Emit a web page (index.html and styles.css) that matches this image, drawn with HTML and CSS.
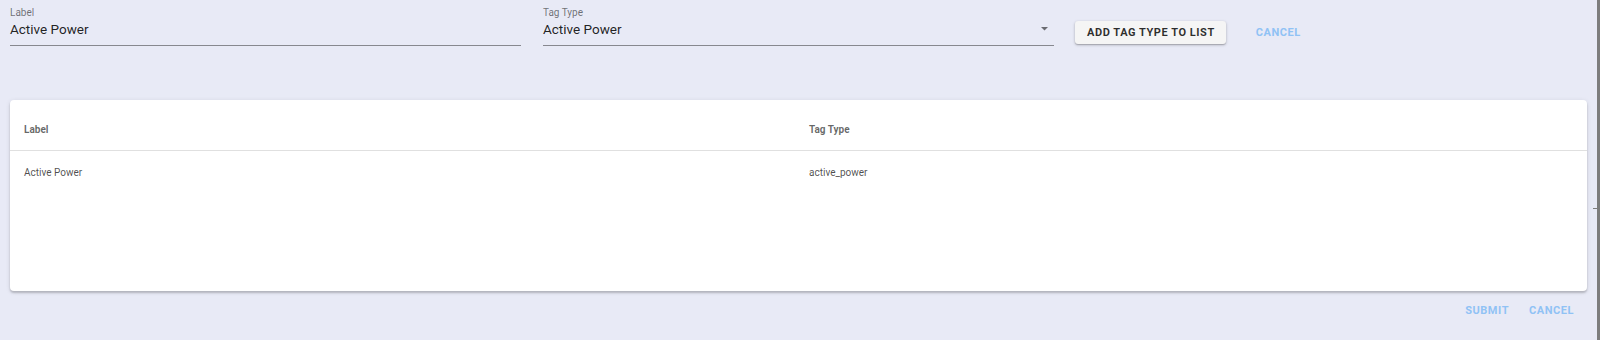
FILE: index.html
```html
<!DOCTYPE html>
<html>
<head>
<meta charset="utf-8">
<link rel="stylesheet" href="styles.css">
</head>
<body>
<div class="page">
  <div class="form-row">
    <div class="field">
      <label class="field-label">Label</label>
      <div class="field-input">Active Power</div>
    </div>
    <div class="field select">
      <label class="field-label">Tag Type</label>
      <div class="field-input">Active Power
        <svg class="arrow" width="7" height="4" viewBox="0 0 7 4"><path d="M0 0 L7 0 L3.5 3.5 Z" fill="rgba(0,0,0,0.54)"/></svg>
      </div>
    </div>
    <button class="btn raised">Add tag type to list</button>
    <button class="btn flat">Cancel</button>
  </div>

  <div class="card">
    <table class="table">
      <thead>
        <tr><th class="col-label">Label</th><th>Tag Type</th></tr>
      </thead>
      <tbody>
        <tr><td>Active Power</td><td>active_power</td></tr>
      </tbody>
    </table>
  </div>

  <div class="actions">
    <button class="btn flat">Submit</button>
    <button class="btn flat">Cancel</button>
  </div>
</div>
</body>
</html>
```
FILE: styles.css
```css
html, body {
  margin: 0;
  padding: 0;
  height: 100%;
}
body {
  background: #e8eaf6;
  font-family: Roboto, "Liberation Sans", sans-serif;
  overflow: hidden;
}
.page {
  box-sizing: border-box;
  height: 340px;
  padding: 0 13px 0 10px;
  border-right: 3px solid #7d7d7d;
  position: relative;
}
.page::after {
  content: "";
  position: absolute;
  right: 0;
  top: 208px;
  width: 4px;
  height: 1px;
  background: #7d7d7d;
}
.form-row {
  display: flex;
  align-items: flex-start;
  padding-top: 7px;
}
.field {
  width: 511px;
  display: flex;
  flex-direction: column;
}
.field.select {
  margin-left: 22px;
}
.field-label {
  font-size: 10px;
  line-height: 12px;
  color: rgba(0,0,0,0.54);
}
.field-input {
  font-size: 13.5px;
  line-height: 20px;
  padding: 0 0 6px;
  color: rgba(0,0,0,0.87);
  border-bottom: 1px solid rgba(0,0,0,0.42);
  display: flex;
  align-items: center;
  justify-content: space-between;
}
.arrow {
  margin-right: 6px;
}
.btn {
  font-family: Roboto, "Liberation Sans", sans-serif;
  font-size: 11px;
  font-weight: 700;
  letter-spacing: 0.55px;
  text-transform: uppercase;
  border: none;
  background: transparent;
  cursor: pointer;
  height: 23px;
}
.btn.raised {
  margin-left: 21px;
  margin-top: 14px;
  padding: 0 11px 0 12px;
  background: #f5f5f5;
  color: rgba(0,0,0,0.82);
  border-radius: 3px;
  box-shadow: 0 1px 3px rgba(0,0,0,0.25), 0 1px 1px rgba(0,0,0,0.14);
}
.btn.flat {
  color: #90c2f5;
  padding: 0 10px;
}
.form-row .btn.flat {
  margin-left: 20px;
  margin-top: 14px;
}
.card {
  margin-top: 54px;
  width: 1577px;
  height: 191px;
  background: #fff;
  border-radius: 4px;
  box-shadow: 0 2px 2px rgba(0,0,0,0.18), 0 1px 5px rgba(0,0,0,0.1);
}
.table {
  width: 100%;
  border-collapse: collapse;
  font-size: 10px;
}
.table th {
  text-align: left;
  vertical-align: middle;
  height: 42px;
  padding: 8px 0 0 14px;
  font-weight: 700;
  color: rgba(0,0,0,0.6);
  border-bottom: 1px solid #e0e0e0;
}
.table th.col-label,
.table td:first-child {
  width: 771px;
}
.table td {
  height: 42px;
  padding: 0 0 0 14px;
  color: rgba(0,0,0,0.7);
}
.actions {
  display: flex;
  justify-content: flex-end;
  margin-top: 8px;
}
```
